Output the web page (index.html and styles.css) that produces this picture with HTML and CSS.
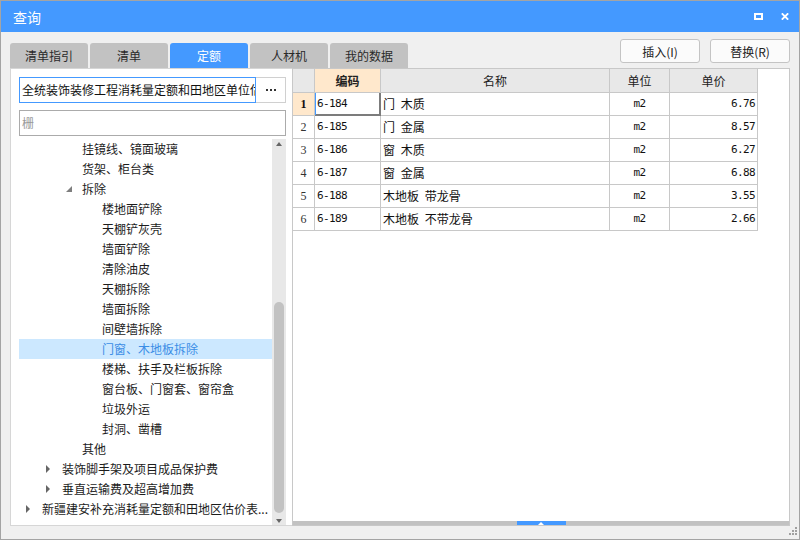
FILE: index.html
```html
<!DOCTYPE html>
<html lang="zh-CN">
<head>
<meta charset="utf-8">
<title>查询</title>
<link rel="stylesheet" href="styles.css">
</head>
<body>
<div class="window">
  <div class="titlebar">
    <span class="title">查询</span>
    <div class="title-btns">
      <svg class="tb-icon" width="9" height="7" viewBox="0 0 9 7"><rect x="1" y="1" width="7" height="5" fill="none" stroke="#fff" stroke-width="2"/></svg>
      <svg class="tb-icon" width="8" height="7" viewBox="0 0 8 7"><path d="M0.8 0.3 L7.2 6.7 M7.2 0.3 L0.8 6.7" stroke="#fff" stroke-width="1.8" fill="none"/></svg>
    </div>
  </div>

  <div class="toprow">
    <div class="tabs">
      <div class="tab">清单指引</div>
      <div class="tab">清单</div>
      <div class="tab active">定额</div>
      <div class="tab">人材机</div>
      <div class="tab">我的数据</div>
    </div>
    <div class="actions">
      <button class="btn">插入(I)</button>
      <button class="btn">替换(R)</button>
    </div>
  </div>

  <div class="main">
    <div class="left">
      <div class="combo">
        <div class="combo-input">全统装饰装修工程消耗量定额和田地区单位估价表</div>
        <div class="combo-btn">
          <svg width="10" height="2" viewBox="0 0 10 2"><rect x="0" y="0" width="2" height="2" fill="#333"/><rect x="4" y="0" width="2" height="2" fill="#333"/><rect x="8" y="0" width="2" height="2" fill="#333"/></svg>
        </div>
      </div>
      <div class="search">栅</div>
      <div class="tree-area">
        <ul class="tree">
          <li class="node lv2"><span class="tg"></span><span class="tx">挂镜线、镜面玻璃</span></li>
          <li class="node lv2"><span class="tg"></span><span class="tx">货架、柜台类</span></li>
          <li class="node lv2"><span class="tg"><i class="tri-open"></i></span><span class="tx">拆除</span></li>
          <li class="node lv3"><span class="tg"></span><span class="tx">楼地面铲除</span></li>
          <li class="node lv3"><span class="tg"></span><span class="tx">天棚铲灰壳</span></li>
          <li class="node lv3"><span class="tg"></span><span class="tx">墙面铲除</span></li>
          <li class="node lv3"><span class="tg"></span><span class="tx">清除油皮</span></li>
          <li class="node lv3"><span class="tg"></span><span class="tx">天棚拆除</span></li>
          <li class="node lv3"><span class="tg"></span><span class="tx">墙面拆除</span></li>
          <li class="node lv3"><span class="tg"></span><span class="tx">间壁墙拆除</span></li>
          <li class="node lv3 selected"><span class="tg"></span><span class="tx">门窗、木地板拆除</span></li>
          <li class="node lv3"><span class="tg"></span><span class="tx">楼梯、扶手及栏板拆除</span></li>
          <li class="node lv3"><span class="tg"></span><span class="tx">窗台板、门窗套、窗帘盒</span></li>
          <li class="node lv3"><span class="tg"></span><span class="tx">垃圾外运</span></li>
          <li class="node lv3"><span class="tg"></span><span class="tx">封洞、凿槽</span></li>
          <li class="node lv2"><span class="tg"></span><span class="tx">其他</span></li>
          <li class="node lv1"><span class="tg"><i class="tri-closed"></i></span><span class="tx">装饰脚手架及项目成品保护费</span></li>
          <li class="node lv1"><span class="tg"><i class="tri-closed"></i></span><span class="tx">垂直运输费及超高增加费</span></li>
          <li class="node lv0"><span class="tg"><i class="tri-closed"></i></span><span class="tx">新疆建安补充消耗量定额和田地区估价表...</span></li>
        </ul>
        <div class="vscroll">
          <div class="sb-up"><i class="arr-up"></i></div>
          <div class="sb-track"><div class="sb-thumb"></div></div>
          <div class="sb-down"><i class="arr-down"></i></div>
        </div>
      </div>
    </div>

    <div class="right">
      <div class="grid-wrap">
        <div class="grid">
          <div class="c h"></div>
          <div class="c h hl b">编码</div>
          <div class="c h">名称</div>
          <div class="c h">单位</div>
          <div class="c h">单价</div>

          <div class="c rn cur">1</div>
          <div class="c code focus">6-184</div>
          <div class="c name">门 木质</div>
          <div class="c unit">m2</div>
          <div class="c price">6.76</div>

          <div class="c rn">2</div>
          <div class="c code">6-185</div>
          <div class="c name">门 金属</div>
          <div class="c unit">m2</div>
          <div class="c price">8.57</div>

          <div class="c rn">3</div>
          <div class="c code">6-186</div>
          <div class="c name">窗 木质</div>
          <div class="c unit">m2</div>
          <div class="c price">6.27</div>

          <div class="c rn">4</div>
          <div class="c code">6-187</div>
          <div class="c name">窗 金属</div>
          <div class="c unit">m2</div>
          <div class="c price">6.88</div>

          <div class="c rn">5</div>
          <div class="c code">6-188</div>
          <div class="c name">木地板 带龙骨</div>
          <div class="c unit">m2</div>
          <div class="c price">3.55</div>

          <div class="c rn">6</div>
          <div class="c code">6-189</div>
          <div class="c name">木地板 不带龙骨</div>
          <div class="c unit">m2</div>
          <div class="c price">2.66</div>
        </div>
      </div>
      <div class="hbar"><div class="hbar-btn"></div></div>
    </div>
  </div>

  <div class="statusbar">
    <svg class="grip" width="10" height="9" viewBox="0 0 10 9"><rect x="7" y="0" width="2" height="2" fill="#a0a0a0"/><rect x="4" y="3" width="2" height="2" fill="#a0a0a0"/><rect x="7" y="3" width="2" height="2" fill="#a0a0a0"/><rect x="1" y="6" width="2" height="2" fill="#a0a0a0"/><rect x="4" y="6" width="2" height="2" fill="#a0a0a0"/><rect x="7" y="6" width="2" height="2" fill="#a0a0a0"/></svg>
  </div>
</div>
</body>
</html>
```

FILE: styles.css
```css
* { box-sizing: border-box; margin: 0; padding: 0; }
html, body { width: 800px; height: 540px; overflow: hidden; }
body {
  font-family: "Noto Sans CJK SC", "Noto Sans", sans-serif;
  font-size: 12px;
  color: #1e1e1e;
  background: #f0f0f0;
}
.window {
  width: 800px;
  height: 540px;
  border: 1px solid #a4a4a4;
  background: #f0f0f0;
  display: flex;
  flex-direction: column;
}

/* title bar */
.titlebar {
  flex: none;
  height: 31px;
  background: #4499ff;
  display: flex;
  align-items: center;
  justify-content: space-between;
  padding: 0 10px 0 12px;
}
.title { color: #fff; font-size: 14px; line-height: 31px; padding-top: 2px; }
.title-btns { display: flex; align-items: center; gap: 18px; }
.tb-icon { display: block; }

/* tabs + buttons */
.toprow {
  flex: none;
  height: 36px;
  display: flex;
  justify-content: space-between;
  padding: 0 9px;
}
.tabs { display: flex; gap: 2px; align-self: flex-end; }
.tab {
  width: 78px;
  height: 25px;
  background: #c2c2c2;
  border-radius: 3px 3px 0 0;
  display: flex;
  align-items: center;
  justify-content: center;
  color: #2a2a2a;
}
.tab.active { background: #4499ff; color: #fff; }
.actions { display: flex; gap: 10px; padding-top: 7px; }
.btn {
  width: 80px;
  height: 24px;
  border: 1px solid #c4c4c4;
  border-radius: 3px;
  background: #fbfbfb;
  font: inherit;
  color: #222;
}

/* main area */
.main {
  flex: none;
  height: 458px;
  display: flex;
  padding: 0 9px;
}
.left {
  width: 282px;
  flex: none;
  background: #fff;
  border: 1px solid #d6d6d6;
  border-right: none;
  padding: 8px 6px 0 8px;
  display: flex;
  flex-direction: column;
}
.combo { display: flex; height: 26px; flex: none; }
.combo-input {
  flex: 1;
  min-width: 0;
  border: 1px solid #4499ff;
  padding-left: 2px;
  line-height: 24px;
  white-space: nowrap;
  overflow: hidden;
  color: #111;
}
.combo-btn {
  width: 30px;
  border: 1px solid #d0d0d0;
  border-left: none;
  display: flex;
  align-items: center;
  justify-content: center;
}
.combo-btn svg { display: block; }
.search {
  flex: none;
  margin-top: 7px;
  height: 26px;
  border: 1px solid #ababab;
  padding-left: 2px;
  line-height: 24px;
  color: #9a9a9a;
}
.tree-area {
  flex: 1;
  min-height: 0;
  margin-top: 3px;
  display: flex;
}
.tree { flex: 1; min-width: 0; list-style: none; overflow: hidden; }
.node {
  height: 20px;
  display: flex;
  align-items: center;
  white-space: nowrap;
  color: #1c1c1c;
}
.node .tg { width: 16px; flex: none; display: flex; align-items: center; height: 20px; }
.node .tx { flex: 1; min-width: 0; overflow: hidden; text-overflow: ellipsis; line-height: 20px; }
.lv0 { padding-left: 7px; }
.lv1 { padding-left: 27px; }
.lv2 { padding-left: 47px; }
.lv3 { padding-left: 67px; }
.node.selected { background: #cce8ff; color: #3b8de6; }
.tri-closed {
  display: block;
  width: 0; height: 0;
  border-left: 4px solid #666;
  border-top: 4px solid transparent;
  border-bottom: 4px solid transparent;
}
.tri-open {
  display: block;
  width: 0; height: 0;
  border-left: 6px solid transparent;
  border-bottom: 6px solid #7e7e7e;
}

/* vertical scrollbar */
.vscroll {
  width: 14px;
  flex: none;
  background: #e8e8e8;
  display: flex;
  flex-direction: column;
  align-items: center;
}
.sb-up { height: 11px; padding-top: 3px; flex: none; }
.sb-down { height: 10px; padding-top: 4px; flex: none; }
.arr-up {
  display: block; width: 0; height: 0;
  border-left: 3.5px solid transparent;
  border-right: 3.5px solid transparent;
  border-bottom: 4px solid #666;
}
.arr-down {
  display: block; width: 0; height: 0;
  border-left: 3.5px solid transparent;
  border-right: 3.5px solid transparent;
  border-top: 4px solid #666;
}
.sb-track { flex: 1; width: 10px; }
.sb-thumb {
  margin-top: 152px;
  height: 211px;
  width: 10px;
  border-radius: 5px;
  background: #c2c2c2;
}

/* right panel */
.right {
  flex: 1;
  min-width: 0;
  border: 1px solid #c8c8c8;
  background: #fff;
  display: flex;
  flex-direction: column;
}
.grid-wrap { flex: 1; min-height: 0; }
.grid {
  display: grid;
  grid-template-columns: 22px 66px 229px 60px 88px;
  width: 465px;
}
.c {
  height: 23px;
  line-height: 22px;
  border-right: 1px solid #c8c8c8;
  border-bottom: 1px solid #c8c8c8;
  white-space: nowrap;
  overflow: hidden;
}
.h {
  height: 24px;
  line-height: 23px;
  background: #e8e8e8;
  text-align: center;
  color: #222;
}
.hl { background: #ffe8cc; }
.b { font-weight: bold; }
.rn {
  text-align: center;
  font-family: "Liberation Serif", serif;
  font-size: 12px;
  color: #333;
}
.rn.cur { background: #ffe8cc; font-weight: bold; color: #111; }
.code, .unit, .price {
  font-family: "DejaVu Sans Mono", "Liberation Mono", monospace;
  font-size: 11px;
  letter-spacing: -0.6px;
  color: #111;
}
.code { padding-left: 2px; }
.unit { text-align: center; }
.price { text-align: right; padding-right: 2px; }
.name { padding-left: 2px; word-spacing: 3px; color: #111; }
.focus {
  border-right-color: #7c7c7c;
  border-bottom-color: #7c7c7c;
  box-shadow: inset 1px 0 0 #4499ff, inset -1px -1px 0 #7c7c7c;
}

.hbar {
  flex: none;
  height: 4px;
  background: #c2c2c2;
  display: flex;
  justify-content: center;
}
.hbar-btn {
  width: 49px;
  background: #4499ff;
  display: flex;
  justify-content: center;
  align-items: flex-end;
}
.hbar-btn::after {
  content: "";
  width: 0; height: 0;
  border-left: 3px solid transparent;
  border-right: 3px solid transparent;
  border-bottom: 3px solid #fff;
}

/* status bar */
.statusbar {
  flex: 1;
  display: flex;
  justify-content: flex-end;
  align-items: flex-start;
  padding: 1px 1px 0 0;
}
.grip { display: block; }
```
